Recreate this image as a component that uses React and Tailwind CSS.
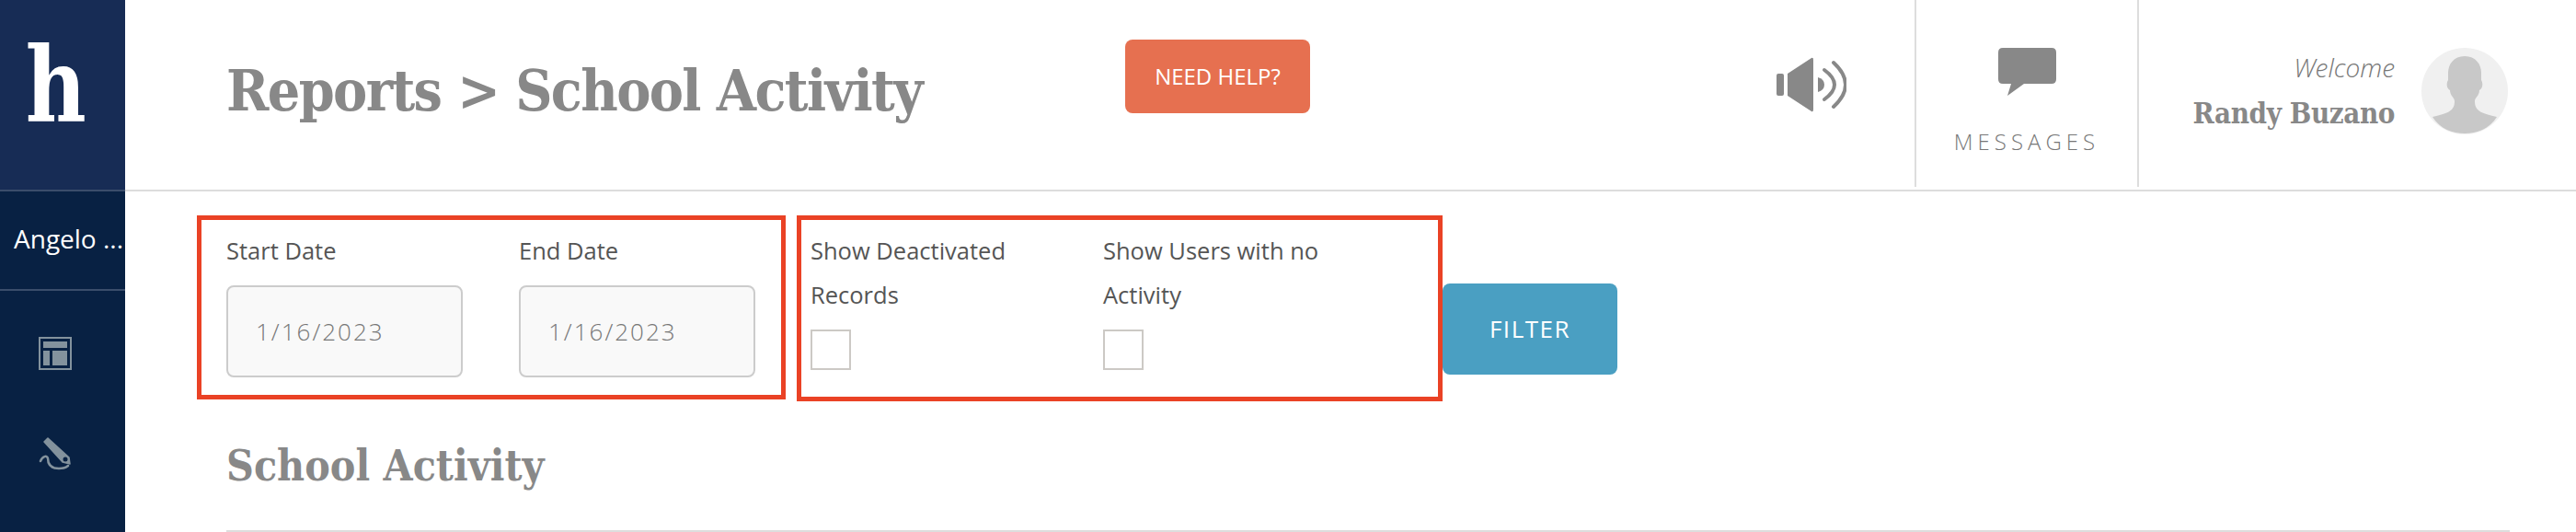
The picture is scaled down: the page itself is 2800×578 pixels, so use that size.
import React from "react";

const slab = { fontFamily: '"DejaVu Serif Condensed","DejaVu Serif",serif' };

function Field({ label, className }) {
  return (
    <div className={className}>
      <div className="text-[25.5px] leading-[48px] text-[#555]">{label}</div>
      <div className="mt-[14px] flex h-[100px] w-[257px] items-center rounded-[8px] border-2 border-[#ccc] bg-[#f9f9f9] pl-[30px] text-[26px] font-light tracking-[2px] text-[#777]">
        1/16/2023
      </div>
    </div>
  );
}

function Check({ lines, className }) {
  return (
    <div className={className}>
      <div className="text-[25.5px] leading-[48px] text-[#555]">
        {lines[0]}
        <br />
        {lines[1]}
      </div>
      <div className="mt-[14px] h-[44px] w-[44px] border-2 border-[#ccc9c5] bg-white" />
    </div>
  );
}

export default function App() {
  return (
    <div className="flex h-[578px] w-[2800px] overflow-hidden bg-white" style={{ fontFamily: '"Open Sans",sans-serif' }}>
      <aside className="flex w-[136px] shrink-0 flex-col bg-[#082143]">
        <div className="flex h-[208px] justify-center border-b-2 border-[#3a4d6b] bg-[#172c55] pr-[15px] pt-[33px]">
          <span className="inline-block scale-x-90 text-[112px] font-bold leading-[120px] text-white" style={slab}>h</span>
        </div>
        <div className="flex h-[108px] items-center overflow-hidden whitespace-nowrap border-b-2 border-[#3a4d6b] pb-[4px] pl-[15px] text-[28px] text-white">
          Angelo ...
        </div>
        <div className="flex flex-col pl-[42px] pt-[50px]">
          <svg width="36" height="36" viewBox="0 0 36 36" className="fill-[#83929d]">
            <rect x="1" y="1" width="34" height="34" fill="none" stroke="#83929d" strokeWidth="2" />
            <rect x="5" y="5" width="26" height="7" />
            <rect x="5" y="15" width="7" height="16" />
            <rect x="15" y="15" width="16" height="16" />
          </svg>
          <svg width="36" height="36" viewBox="0 0 36 36" className="mt-[73px]" fill="none">
            <path d="M6 5 L10 1 L33 22 L34 29 L26 27 Z" fill="#83929d" stroke="#83929d" strokeWidth="1.5" strokeLinejoin="round" />
            <circle cx="29" cy="24" r="2.5" fill="#082143" />
            <path d="M2 26 C4 21 9 19 10 23 C10 30 14 34 22 34 C27 34 30 33 32 31" stroke="#83929d" strokeWidth="2.5" strokeLinecap="round" />
          </svg>
        </div>
      </aside>
      <main className="flex min-w-0 flex-1 flex-col">
        <header className="flex h-[208px] shrink-0 border-b-2 border-[#ddd] pb-[3px]">
          <div className="flex w-[1795px] shrink-0">
            <h1 className="w-[1087px] shrink-0 whitespace-nowrap pl-[110px] pt-[57px] text-[62px] font-bold leading-[84px] tracking-[-1.6px] text-[#888]" style={slab}>
              Reports &gt; School Activity
            </h1>
            <button className="mt-[43px] flex h-[80px] w-[201px] items-center justify-center rounded-[8px] bg-[#e67050] text-[24px] font-medium text-white">
              NEED HELP?
            </button>
          </div>
          <div className="w-[150px] pt-[62px]">
            <svg width="76" height="60" viewBox="0 0 76 60" fill="#888">
              <rect x="0" y="18" width="8" height="24" rx="2" />
              <path d="M12 18 L38 1 Q40 0 40 3 V57 Q40 60 38 59 L12 42 Z" />
              <path d="M45 22 Q52 24 52 30 Q52 36 45 38 Z" />
              <path d="M52 14 Q63 22 63 30 Q63 38 52 46" fill="none" stroke="#888" strokeWidth="4" strokeLinecap="round" />
              <path d="M62 6 Q75 18 75 30 Q75 42 62 54" fill="none" stroke="#888" strokeWidth="4" strokeLinecap="round" />
            </svg>
          </div>
          <div className="flex w-[244px] flex-col items-center border-x-2 border-[#ddd] pt-[52px]">
            <svg width="63" height="52" viewBox="0 0 63 52" fill="#888">
              <path d="M5 0 H58 Q63 0 63 5 V34 Q63 39 58 39 H28 L10 52 L14 39 H5 Q0 39 0 34 V5 Q0 0 5 0 Z" />
            </svg>
            <div className="mt-[35px] text-[24px] font-light leading-[30px] tracking-[5px] text-[#777]">MESSAGES</div>
          </div>
          <div className="flex flex-1 items-start justify-end pr-[74px] pt-[52px]">
            <div className="mr-[29px] text-right">
              <div className="-mt-[4px] text-[28px] font-light italic leading-[50px] text-[#777]">Welcome</div>
              <div className="text-[31px] font-bold leading-[50px] tracking-[-0.4px] text-[#888]" style={slab}>Randy Buzano</div>
            </div>
            <div className="h-[94px] w-[94px] overflow-hidden rounded-full bg-[#f0f0f0]">
              <svg width="94" height="94" viewBox="0 0 94 94" fill="#c8c8c8">
                <path d="M47 9 C59 9 65 18 65 27 C65 31 65 34 65 35 C67 38 67 44 63 46 C63 52 58 54 58 58 C58 68 64 71 82 75 C74 88 60 93 47 93 C34 93 20 88 12 75 C30 71 36 68 36 58 C36 54 31 52 31 46 C27 44 27 38 29 35 C29 34 29 31 29 27 C29 18 35 9 47 9 Z" />
              </svg>
            </div>
          </div>
        </header>
        <section className="pl-[78px] pt-[26px]">
          <div className="flex items-start">
            <div className="flex h-[200px] w-[640px] border-[5px] border-[#ea4225] pl-[27px] pt-[9px]">
              <Field label="Start Date" />
              <Field label="End Date" className="ml-[61px]" />
            </div>
            <div className="ml-[12px] flex h-[202px] w-[702px] border-[5px] border-[#ea4225] pl-[10px] pt-[9px]">
              <Check lines={["Show Deactivated", "Records"]} className="w-[318px]" />
              <Check lines={["Show Users with no", "Activity"]} />
            </div>
            <button className="mt-[74px] flex h-[99px] w-[190px] items-center justify-center rounded-[8px] bg-[#4a9fc2] text-[26px] font-medium tracking-[1.5px] text-white">
              FILTER
            </button>
          </div>
          <div className="pl-[32px]">
            <h2 className="mt-[34px] text-[46px] font-bold leading-[72px] text-[#888]" style={slab}>School Activity</h2>
            <div className="mt-[34px] h-[2px] w-[2482px] bg-[#ddd]" />
          </div>
        </section>
      </main>
    </div>
  );
}
